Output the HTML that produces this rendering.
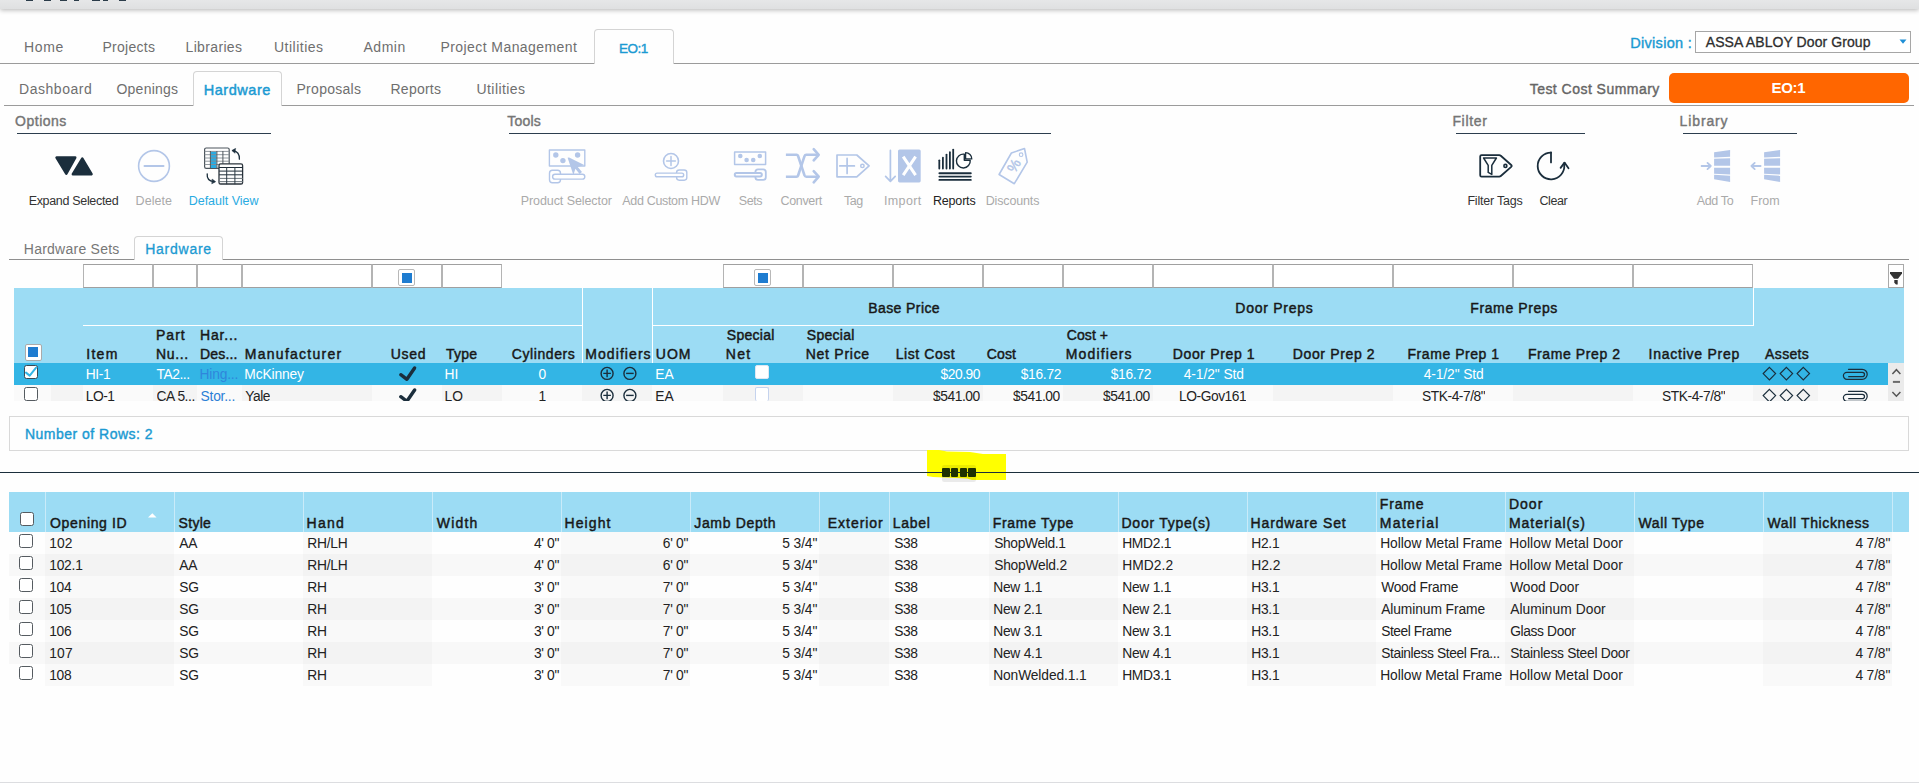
<!DOCTYPE html><html lang="en"><head><meta charset="utf-8"><title>EO:1 - Hardware</title><style>
html,body{margin:0;padding:0;}
body{width:1919px;height:783px;position:relative;overflow:hidden;background:#fefefe;
 font-family:"Liberation Sans",sans-serif;}
.a{position:absolute;}
.t{position:absolute;white-space:nowrap;line-height:20px;height:20px;}
.topbar{left:0;top:0;width:1919px;height:9px;background:linear-gradient(#e6e7e8,#dfe0e1);box-shadow:0 1px 5px rgba(0,0,0,.3);}
.hl{height:1px;background:#9b9b9b;}
.ul{height:1px;background:#2c3e4e;}
.tab{background:#fefefe;border:1px solid #d4d4d4;border-bottom:none;border-radius:4px 4px 0 0;box-sizing:border-box;}
.fb{top:264px;height:24px;box-sizing:border-box;border:1px solid #b4b4b4;border-top-color:#a0a0a0;border-bottom-color:#a0a0a0;background:#fff;}
.cb{box-sizing:border-box;background:#fff;border:1px solid #9a9a9a;border-radius:2px;}
.cbd{box-sizing:border-box;background:#fff;border:1.4px solid #555b60;border-radius:2.5px;}
</style></head><body>
<div class="a topbar"></div>
<div class="a " style="left:26.3px;top:0px;width:7.1px;height:1px;background:#1b2e3c;opacity:.92;"></div>
<div class="a " style="left:43.8px;top:0px;width:7.4px;height:1px;background:#1b2e3c;opacity:.92;"></div>
<div class="a " style="left:60px;top:0px;width:7.4px;height:1px;background:#1b2e3c;opacity:.92;"></div>
<div class="a " style="left:73.8px;top:0px;width:5.6px;height:1px;background:#1b2e3c;opacity:.92;"></div>
<div class="a " style="left:92px;top:0px;width:8px;height:1px;background:#1b2e3c;opacity:.92;"></div>
<div class="a " style="left:102.5px;top:0px;width:5.5px;height:1px;background:#1b2e3c;opacity:.92;"></div>
<div class="a " style="left:119.4px;top:0px;width:6.2px;height:1px;background:#1b2e3c;opacity:.92;"></div>
<div class="a hl" style="left:0px;top:63px;width:1919px;height:1px;"></div>
<div class="a hl" style="left:4px;top:105px;width:1910px;height:1px;"></div>
<div class="a tab" style="left:594px;top:29px;width:80px;height:35px;"></div>
<div class="a tab" style="left:193px;top:71px;width:89px;height:35px;"></div>
<div class="a " style="left:1695px;top:31px;width:216px;height:22px;box-sizing:border-box;border:1px solid #a6a6a6;background:#fff;"></div>
<svg class="a" style="left:1899px;top:39px" width="9" height="6"><path d="M0.5 0.5h7l-3.5 4.2z" fill="#1f8fd6"/></svg>
<div class="a " style="left:1669px;top:73px;width:240px;height:30px;background:#ff6600;border-radius:5px;"></div>
<div class="a ul" style="left:17px;top:133px;width:254px;height:1px;"></div>
<div class="a ul" style="left:509px;top:133px;width:542px;height:1px;"></div>
<div class="a ul" style="left:1456px;top:133px;width:129px;height:1px;"></div>
<div class="a ul" style="left:1683px;top:133px;width:114px;height:1px;"></div>
<div class="a hl" style="left:9px;top:259px;width:1900px;height:1px;background:#8f8f8f;"></div>
<div class="a tab" style="left:134px;top:236px;width:89px;height:24px;"></div>
<div class="a fb" style="left:83px;top:264px;width:70px;height:24px;"></div>
<div class="a fb" style="left:153px;top:264px;width:44px;height:24px;"></div>
<div class="a fb" style="left:197px;top:264px;width:45px;height:24px;"></div>
<div class="a fb" style="left:242px;top:264px;width:130px;height:24px;"></div>
<div class="a fb" style="left:372px;top:264px;width:70px;height:24px;"></div>
<div class="a fb" style="left:442px;top:264px;width:60px;height:24px;"></div>
<div class="a fb" style="left:723px;top:264px;width:80px;height:24px;"></div>
<div class="a fb" style="left:803px;top:264px;width:90px;height:24px;"></div>
<div class="a fb" style="left:893px;top:264px;width:90px;height:24px;"></div>
<div class="a fb" style="left:983px;top:264px;width:80px;height:24px;"></div>
<div class="a fb" style="left:1063px;top:264px;width:90px;height:24px;"></div>
<div class="a fb" style="left:1153px;top:264px;width:120px;height:24px;"></div>
<div class="a fb" style="left:1273px;top:264px;width:120px;height:24px;"></div>
<div class="a fb" style="left:1393px;top:264px;width:120px;height:24px;"></div>
<div class="a fb" style="left:1513px;top:264px;width:120px;height:24px;"></div>
<div class="a fb" style="left:1633px;top:264px;width:120px;height:24px;"></div>
<div class="a cb" style="left:398px;top:269px;width:16.5px;height:16.5px;border-color:#b8b8b8;"><div class="a" style="left:2.5px;top:2.5px;width:10px;height:10px;background:#1e7cd0"></div></div>
<div class="a cb" style="left:754px;top:269px;width:16.5px;height:16.5px;border-color:#b8b8b8;"><div class="a" style="left:2.5px;top:2.5px;width:10px;height:10px;background:#1e7cd0"></div></div>
<div class="a " style="left:1888px;top:264px;width:16px;height:24px;box-sizing:border-box;border:1px solid #a9a9a9;background:#fff;"></div>
<svg class="a" style="left:1889px;top:269px" width="14" height="17"><path d="M1 3h12v1.4l-4 5.4h-4l-4-5.4z" fill="#333"/><path d="M5.3 11h3.4v4.4h-1.7l-1.7-1.6z" fill="#333"/></svg>
<div class="a " style="left:14px;top:288px;width:1890px;height:75px;background:#9cdcf4;"></div>
<div class="a " style="left:83px;top:325px;width:500px;height:1px;background:#fff;"></div>
<div class="a " style="left:652px;top:325px;width:1101px;height:1px;background:#fff;"></div>
<div class="a " style="left:582px;top:288px;width:1px;height:75px;background:#fff;"></div>
<div class="a " style="left:652px;top:288px;width:1px;height:75px;background:#fff;"></div>
<div class="a " style="left:1753px;top:288px;width:1px;height:38px;background:#fff;"></div>
<div class="a cb" style="left:25px;top:344px;width:16.5px;height:16.5px;border-color:#aaa;"><div class="a" style="left:2.2px;top:2.2px;width:10px;height:10px;background:#1e7cd0"></div></div>
<div class="a " style="left:14px;top:363px;width:1874px;height:22px;background:#33b5e5;"></div>
<div class="a " style="left:14px;top:385px;width:37px;height:16px;background:#fafafa;"></div>
<div class="a " style="left:51px;top:385px;width:32px;height:16px;background:#f4f4f4;"></div>
<div class="a " style="left:83px;top:385px;width:70px;height:16px;background:#fafafa;"></div>
<div class="a " style="left:153px;top:385px;width:44px;height:16px;background:#f4f4f4;"></div>
<div class="a " style="left:197px;top:385px;width:45px;height:16px;background:#fafafa;"></div>
<div class="a " style="left:242px;top:385px;width:130px;height:16px;background:#f4f4f4;"></div>
<div class="a " style="left:372px;top:385px;width:70px;height:16px;background:#fafafa;"></div>
<div class="a " style="left:442px;top:385px;width:60px;height:16px;background:#f4f4f4;"></div>
<div class="a " style="left:502px;top:385px;width:80px;height:16px;background:#fafafa;"></div>
<div class="a " style="left:582px;top:385px;width:70px;height:16px;background:#f4f4f4;"></div>
<div class="a " style="left:652px;top:385px;width:71px;height:16px;background:#fafafa;"></div>
<div class="a " style="left:723px;top:385px;width:80px;height:16px;background:#f4f4f4;"></div>
<div class="a " style="left:803px;top:385px;width:90px;height:16px;background:#fafafa;"></div>
<div class="a " style="left:893px;top:385px;width:90px;height:16px;background:#f4f4f4;"></div>
<div class="a " style="left:983px;top:385px;width:80px;height:16px;background:#fafafa;"></div>
<div class="a " style="left:1063px;top:385px;width:90px;height:16px;background:#f4f4f4;"></div>
<div class="a " style="left:1153px;top:385px;width:120px;height:16px;background:#fafafa;"></div>
<div class="a " style="left:1273px;top:385px;width:120px;height:16px;background:#f4f4f4;"></div>
<div class="a " style="left:1393px;top:385px;width:120px;height:16px;background:#fafafa;"></div>
<div class="a " style="left:1513px;top:385px;width:120px;height:16px;background:#f4f4f4;"></div>
<div class="a " style="left:1633px;top:385px;width:120px;height:16px;background:#fafafa;"></div>
<div class="a " style="left:1753px;top:385px;width:65px;height:16px;background:#f4f4f4;"></div>
<div class="a " style="left:1818px;top:385px;width:70px;height:16px;background:#fafafa;"></div>
<div class="a cbd" style="left:24px;top:365px;width:14px;height:14px;border-color:#3b4852;"><svg class="a" style="left:-1.4px;top:-1.4px;overflow:visible" width="14" height="14"><path d="M2 7.6l3.7 3 6.4-7.9" fill="none" stroke="#33b5e5" stroke-width="2" stroke-linecap="round" stroke-linejoin="round"/></svg></div>
<div class="a cbd" style="left:24px;top:387px;width:14px;height:14px;"></div>
<div class="a" style="left:397px;top:365px;width:22px;height:18px;"><svg width="22" height="18" fill="none" stroke="#1b2e3c" stroke-width="3.4" stroke-linecap="round" stroke-linejoin="round"><path d="M3.8 9.7l6.1 4.6 7.7-11.3"/></svg></div>
<div class="a" style="left:397px;top:387px;width:22px;height:18px;height:14px;overflow:hidden;"><svg width="22" height="18" fill="none" stroke="#1b2e3c" stroke-width="3.4" stroke-linecap="round" stroke-linejoin="round"><path d="M3.8 9.7l6.1 4.6 7.7-11.3"/></svg></div>
<div class="a" style="left:599px;top:366px;width:40px;height:15px;"><svg width="40" height="15" fill="none" stroke="#1b2e3c" stroke-width="1.4"><circle cx="8.1" cy="7.4" r="6"/><path d="M8.1 3.6v7.6M4.3 7.4h7.6"/><circle cx="30.9" cy="7.4" r="6"/><path d="M27.1 7.4h7.6"/></svg></div>
<div class="a" style="left:599px;top:388px;width:40px;height:15px;height:13px;overflow:hidden;"><svg width="40" height="15" fill="none" stroke="#1b2e3c" stroke-width="1.4"><circle cx="8.1" cy="7.4" r="6"/><path d="M8.1 3.6v7.6M4.3 7.4h7.6"/><circle cx="30.9" cy="7.4" r="6"/><path d="M27.1 7.4h7.6"/></svg></div>
<div class="a " style="left:755px;top:365px;width:14px;height:14px;box-sizing:border-box;background:#fff;border:1px solid #dfe7f2;border-radius:2px;"></div>
<div class="a " style="left:755px;top:387px;width:14px;height:14px;box-sizing:border-box;background:#fff;border:1px solid #c5d3ee;border-radius:2px;border-bottom:none;"></div>
<div class="a" style="left:1762px;top:366px;width:110px;height:15px;"><svg width="110" height="15" fill="none" stroke="#1b2e3c" stroke-width="1.2"><path d="M7.4 1.3l6.2 6.3-6.2 6.3-6.2-6.3z"/><path d="M24.4 1.3l6.2 6.3-6.2 6.3-6.2-6.3z"/><path d="M41.3 1.3l6.2 6.3-6.2 6.3-6.2-6.3z"/><path d="M86.5 3.3h13.7a5 5 0 0 1 0 10h-15.3a3.5 3.5 0 0 1 0-7h15.4a2.2 2.2 0 0 1 0 4.4h-13.6" stroke-width="1.25" stroke-linecap="round"/></svg></div>
<div class="a" style="left:1762px;top:388px;width:110px;height:15px;height:13px;overflow:hidden;"><svg width="110" height="15" fill="none" stroke="#1b2e3c" stroke-width="1.2"><path d="M7.4 1.3l6.2 6.3-6.2 6.3-6.2-6.3z"/><path d="M24.4 1.3l6.2 6.3-6.2 6.3-6.2-6.3z"/><path d="M41.3 1.3l6.2 6.3-6.2 6.3-6.2-6.3z"/><path d="M86.5 3.3h13.7a5 5 0 0 1 0 10h-15.3a3.5 3.5 0 0 1 0-7h15.4a2.2 2.2 0 0 1 0 4.4h-13.6" stroke-width="1.25" stroke-linecap="round"/></svg></div>
<div class="a " style="left:1888px;top:363px;width:16px;height:38px;background:#ebebeb;"></div>
<svg class="a" style="left:1888px;top:363px" width="16" height="38" fill="none" stroke="#555" stroke-width="1.5"><path d="M4.4 10.9l4-4.2 4 4.2"/><path d="M4.4 29l4 4.2 4-4.2"/><path d="M4.9 18.9h7.1" stroke="#6a6a6a" stroke-width="2"/></svg>
<div class="a " style="left:9px;top:416px;width:1900px;height:35px;box-sizing:border-box;border:1px solid #d9d9d9;background:#fefefe;"></div>
<svg class="a" style="left:920px;top:446px" width="95" height="40"><polygon points="7,4 19,4 27,5.5 50,6 63,8 86,8 86,34 52,34 47,32.5 13,31 7,30" fill="#ffff00"/></svg>
<div class="a " style="left:0px;top:472px;width:1919px;height:1px;background:#1b2e3c;"></div>
<div class="a " style="left:942px;top:464.5px;width:34px;height:17.5px;background:rgba(0,0,0,.08);border-radius:2px;"></div>
<div class="a " style="left:942.3px;top:468px;width:7.4px;height:9.3px;background:#1e3100;border-radius:1px;"></div>
<div class="a " style="left:950.9px;top:468px;width:7.4px;height:9.3px;background:#1e3100;border-radius:1px;"></div>
<div class="a " style="left:959.6px;top:468px;width:7.4px;height:9.3px;background:#1e3100;border-radius:1px;"></div>
<div class="a " style="left:968.2px;top:468px;width:7.4px;height:9.3px;background:#1e3100;border-radius:1px;"></div>
<div class="a " style="left:9px;top:492px;width:1900px;height:40px;background:#9cdcf4;"></div>
<div class="a " style="left:45px;top:492px;width:1px;height:40px;background:#c9ebf9;"></div>
<div class="a " style="left:174px;top:492px;width:1px;height:40px;background:#c9ebf9;"></div>
<div class="a " style="left:303px;top:492px;width:1px;height:40px;background:#c9ebf9;"></div>
<div class="a " style="left:432px;top:492px;width:1px;height:40px;background:#c9ebf9;"></div>
<div class="a " style="left:561px;top:492px;width:1px;height:40px;background:#c9ebf9;"></div>
<div class="a " style="left:690px;top:492px;width:1px;height:40px;background:#c9ebf9;"></div>
<div class="a " style="left:819px;top:492px;width:1px;height:40px;background:#c9ebf9;"></div>
<div class="a " style="left:889px;top:492px;width:1px;height:40px;background:#c9ebf9;"></div>
<div class="a " style="left:989px;top:492px;width:1px;height:40px;background:#c9ebf9;"></div>
<div class="a " style="left:1118px;top:492px;width:1px;height:40px;background:#c9ebf9;"></div>
<div class="a " style="left:1247px;top:492px;width:1px;height:40px;background:#c9ebf9;"></div>
<div class="a " style="left:1376px;top:492px;width:1px;height:40px;background:#c9ebf9;"></div>
<div class="a " style="left:1505px;top:492px;width:1px;height:40px;background:#c9ebf9;"></div>
<div class="a " style="left:1634px;top:492px;width:1px;height:40px;background:#c9ebf9;"></div>
<div class="a " style="left:1763px;top:492px;width:1px;height:40px;background:#c9ebf9;"></div>
<div class="a " style="left:1892px;top:492px;width:1px;height:40px;background:#c9ebf9;"></div>
<div class="a cbd" style="left:20px;top:512px;width:14px;height:14px;"></div>
<svg class="a" style="left:148px;top:513px" width="9" height="5"><path d="M0 4.6L4.3 0.2 8.6 4.6z" fill="#fff"/></svg>
<div class="a " style="left:9px;top:532px;width:36px;height:22px;background:#fefefe;"></div>
<div class="a " style="left:45px;top:532px;width:129px;height:22px;background:#f9f9f9;"></div>
<div class="a " style="left:174px;top:532px;width:129px;height:22px;background:#fefefe;"></div>
<div class="a " style="left:303px;top:532px;width:129px;height:22px;background:#f9f9f9;"></div>
<div class="a " style="left:432px;top:532px;width:129px;height:22px;background:#fefefe;"></div>
<div class="a " style="left:561px;top:532px;width:129px;height:22px;background:#f9f9f9;"></div>
<div class="a " style="left:690px;top:532px;width:129px;height:22px;background:#fefefe;"></div>
<div class="a " style="left:819px;top:532px;width:70px;height:22px;background:#f9f9f9;"></div>
<div class="a " style="left:889px;top:532px;width:100px;height:22px;background:#fefefe;"></div>
<div class="a " style="left:989px;top:532px;width:129px;height:22px;background:#f9f9f9;"></div>
<div class="a " style="left:1118px;top:532px;width:129px;height:22px;background:#fefefe;"></div>
<div class="a " style="left:1247px;top:532px;width:129px;height:22px;background:#f9f9f9;"></div>
<div class="a " style="left:1376px;top:532px;width:129px;height:22px;background:#fefefe;"></div>
<div class="a " style="left:1505px;top:532px;width:129px;height:22px;background:#f9f9f9;"></div>
<div class="a " style="left:1634px;top:532px;width:129px;height:22px;background:#fefefe;"></div>
<div class="a " style="left:1763px;top:532px;width:129px;height:22px;background:#f9f9f9;"></div>
<div class="a cbd" style="left:19px;top:534px;width:14px;height:14px;"></div>
<div class="a " style="left:9px;top:554px;width:36px;height:22px;background:#f8f8f8;"></div>
<div class="a " style="left:45px;top:554px;width:129px;height:22px;background:#f3f3f3;"></div>
<div class="a " style="left:174px;top:554px;width:129px;height:22px;background:#f8f8f8;"></div>
<div class="a " style="left:303px;top:554px;width:129px;height:22px;background:#f3f3f3;"></div>
<div class="a " style="left:432px;top:554px;width:129px;height:22px;background:#f8f8f8;"></div>
<div class="a " style="left:561px;top:554px;width:129px;height:22px;background:#f3f3f3;"></div>
<div class="a " style="left:690px;top:554px;width:129px;height:22px;background:#f8f8f8;"></div>
<div class="a " style="left:819px;top:554px;width:70px;height:22px;background:#f3f3f3;"></div>
<div class="a " style="left:889px;top:554px;width:100px;height:22px;background:#f8f8f8;"></div>
<div class="a " style="left:989px;top:554px;width:129px;height:22px;background:#f3f3f3;"></div>
<div class="a " style="left:1118px;top:554px;width:129px;height:22px;background:#f8f8f8;"></div>
<div class="a " style="left:1247px;top:554px;width:129px;height:22px;background:#f3f3f3;"></div>
<div class="a " style="left:1376px;top:554px;width:129px;height:22px;background:#f8f8f8;"></div>
<div class="a " style="left:1505px;top:554px;width:129px;height:22px;background:#f3f3f3;"></div>
<div class="a " style="left:1634px;top:554px;width:129px;height:22px;background:#f8f8f8;"></div>
<div class="a " style="left:1763px;top:554px;width:129px;height:22px;background:#f3f3f3;"></div>
<div class="a cbd" style="left:19px;top:556px;width:14px;height:14px;"></div>
<div class="a " style="left:9px;top:576px;width:36px;height:22px;background:#fefefe;"></div>
<div class="a " style="left:45px;top:576px;width:129px;height:22px;background:#f9f9f9;"></div>
<div class="a " style="left:174px;top:576px;width:129px;height:22px;background:#fefefe;"></div>
<div class="a " style="left:303px;top:576px;width:129px;height:22px;background:#f9f9f9;"></div>
<div class="a " style="left:432px;top:576px;width:129px;height:22px;background:#fefefe;"></div>
<div class="a " style="left:561px;top:576px;width:129px;height:22px;background:#f9f9f9;"></div>
<div class="a " style="left:690px;top:576px;width:129px;height:22px;background:#fefefe;"></div>
<div class="a " style="left:819px;top:576px;width:70px;height:22px;background:#f9f9f9;"></div>
<div class="a " style="left:889px;top:576px;width:100px;height:22px;background:#fefefe;"></div>
<div class="a " style="left:989px;top:576px;width:129px;height:22px;background:#f9f9f9;"></div>
<div class="a " style="left:1118px;top:576px;width:129px;height:22px;background:#fefefe;"></div>
<div class="a " style="left:1247px;top:576px;width:129px;height:22px;background:#f9f9f9;"></div>
<div class="a " style="left:1376px;top:576px;width:129px;height:22px;background:#fefefe;"></div>
<div class="a " style="left:1505px;top:576px;width:129px;height:22px;background:#f9f9f9;"></div>
<div class="a " style="left:1634px;top:576px;width:129px;height:22px;background:#fefefe;"></div>
<div class="a " style="left:1763px;top:576px;width:129px;height:22px;background:#f9f9f9;"></div>
<div class="a cbd" style="left:19px;top:578px;width:14px;height:14px;"></div>
<div class="a " style="left:9px;top:598px;width:36px;height:22px;background:#f8f8f8;"></div>
<div class="a " style="left:45px;top:598px;width:129px;height:22px;background:#f3f3f3;"></div>
<div class="a " style="left:174px;top:598px;width:129px;height:22px;background:#f8f8f8;"></div>
<div class="a " style="left:303px;top:598px;width:129px;height:22px;background:#f3f3f3;"></div>
<div class="a " style="left:432px;top:598px;width:129px;height:22px;background:#f8f8f8;"></div>
<div class="a " style="left:561px;top:598px;width:129px;height:22px;background:#f3f3f3;"></div>
<div class="a " style="left:690px;top:598px;width:129px;height:22px;background:#f8f8f8;"></div>
<div class="a " style="left:819px;top:598px;width:70px;height:22px;background:#f3f3f3;"></div>
<div class="a " style="left:889px;top:598px;width:100px;height:22px;background:#f8f8f8;"></div>
<div class="a " style="left:989px;top:598px;width:129px;height:22px;background:#f3f3f3;"></div>
<div class="a " style="left:1118px;top:598px;width:129px;height:22px;background:#f8f8f8;"></div>
<div class="a " style="left:1247px;top:598px;width:129px;height:22px;background:#f3f3f3;"></div>
<div class="a " style="left:1376px;top:598px;width:129px;height:22px;background:#f8f8f8;"></div>
<div class="a " style="left:1505px;top:598px;width:129px;height:22px;background:#f3f3f3;"></div>
<div class="a " style="left:1634px;top:598px;width:129px;height:22px;background:#f8f8f8;"></div>
<div class="a " style="left:1763px;top:598px;width:129px;height:22px;background:#f3f3f3;"></div>
<div class="a cbd" style="left:19px;top:600px;width:14px;height:14px;"></div>
<div class="a " style="left:9px;top:620px;width:36px;height:22px;background:#fefefe;"></div>
<div class="a " style="left:45px;top:620px;width:129px;height:22px;background:#f9f9f9;"></div>
<div class="a " style="left:174px;top:620px;width:129px;height:22px;background:#fefefe;"></div>
<div class="a " style="left:303px;top:620px;width:129px;height:22px;background:#f9f9f9;"></div>
<div class="a " style="left:432px;top:620px;width:129px;height:22px;background:#fefefe;"></div>
<div class="a " style="left:561px;top:620px;width:129px;height:22px;background:#f9f9f9;"></div>
<div class="a " style="left:690px;top:620px;width:129px;height:22px;background:#fefefe;"></div>
<div class="a " style="left:819px;top:620px;width:70px;height:22px;background:#f9f9f9;"></div>
<div class="a " style="left:889px;top:620px;width:100px;height:22px;background:#fefefe;"></div>
<div class="a " style="left:989px;top:620px;width:129px;height:22px;background:#f9f9f9;"></div>
<div class="a " style="left:1118px;top:620px;width:129px;height:22px;background:#fefefe;"></div>
<div class="a " style="left:1247px;top:620px;width:129px;height:22px;background:#f9f9f9;"></div>
<div class="a " style="left:1376px;top:620px;width:129px;height:22px;background:#fefefe;"></div>
<div class="a " style="left:1505px;top:620px;width:129px;height:22px;background:#f9f9f9;"></div>
<div class="a " style="left:1634px;top:620px;width:129px;height:22px;background:#fefefe;"></div>
<div class="a " style="left:1763px;top:620px;width:129px;height:22px;background:#f9f9f9;"></div>
<div class="a cbd" style="left:19px;top:622px;width:14px;height:14px;"></div>
<div class="a " style="left:9px;top:642px;width:36px;height:22px;background:#f8f8f8;"></div>
<div class="a " style="left:45px;top:642px;width:129px;height:22px;background:#f3f3f3;"></div>
<div class="a " style="left:174px;top:642px;width:129px;height:22px;background:#f8f8f8;"></div>
<div class="a " style="left:303px;top:642px;width:129px;height:22px;background:#f3f3f3;"></div>
<div class="a " style="left:432px;top:642px;width:129px;height:22px;background:#f8f8f8;"></div>
<div class="a " style="left:561px;top:642px;width:129px;height:22px;background:#f3f3f3;"></div>
<div class="a " style="left:690px;top:642px;width:129px;height:22px;background:#f8f8f8;"></div>
<div class="a " style="left:819px;top:642px;width:70px;height:22px;background:#f3f3f3;"></div>
<div class="a " style="left:889px;top:642px;width:100px;height:22px;background:#f8f8f8;"></div>
<div class="a " style="left:989px;top:642px;width:129px;height:22px;background:#f3f3f3;"></div>
<div class="a " style="left:1118px;top:642px;width:129px;height:22px;background:#f8f8f8;"></div>
<div class="a " style="left:1247px;top:642px;width:129px;height:22px;background:#f3f3f3;"></div>
<div class="a " style="left:1376px;top:642px;width:129px;height:22px;background:#f8f8f8;"></div>
<div class="a " style="left:1505px;top:642px;width:129px;height:22px;background:#f3f3f3;"></div>
<div class="a " style="left:1634px;top:642px;width:129px;height:22px;background:#f8f8f8;"></div>
<div class="a " style="left:1763px;top:642px;width:129px;height:22px;background:#f3f3f3;"></div>
<div class="a cbd" style="left:19px;top:644px;width:14px;height:14px;"></div>
<div class="a " style="left:9px;top:664px;width:36px;height:22px;background:#fefefe;"></div>
<div class="a " style="left:45px;top:664px;width:129px;height:22px;background:#f9f9f9;"></div>
<div class="a " style="left:174px;top:664px;width:129px;height:22px;background:#fefefe;"></div>
<div class="a " style="left:303px;top:664px;width:129px;height:22px;background:#f9f9f9;"></div>
<div class="a " style="left:432px;top:664px;width:129px;height:22px;background:#fefefe;"></div>
<div class="a " style="left:561px;top:664px;width:129px;height:22px;background:#f9f9f9;"></div>
<div class="a " style="left:690px;top:664px;width:129px;height:22px;background:#fefefe;"></div>
<div class="a " style="left:819px;top:664px;width:70px;height:22px;background:#f9f9f9;"></div>
<div class="a " style="left:889px;top:664px;width:100px;height:22px;background:#fefefe;"></div>
<div class="a " style="left:989px;top:664px;width:129px;height:22px;background:#f9f9f9;"></div>
<div class="a " style="left:1118px;top:664px;width:129px;height:22px;background:#fefefe;"></div>
<div class="a " style="left:1247px;top:664px;width:129px;height:22px;background:#f9f9f9;"></div>
<div class="a " style="left:1376px;top:664px;width:129px;height:22px;background:#fefefe;"></div>
<div class="a " style="left:1505px;top:664px;width:129px;height:22px;background:#f9f9f9;"></div>
<div class="a " style="left:1634px;top:664px;width:129px;height:22px;background:#fefefe;"></div>
<div class="a " style="left:1763px;top:664px;width:129px;height:22px;background:#f9f9f9;"></div>
<div class="a cbd" style="left:19px;top:666px;width:14px;height:14px;"></div>
<div class="a " style="left:0px;top:782px;width:1919px;height:1px;background:#dcdde0;"></div>
<svg class="a" style="left:0;top:140px" width="1919" height="50" viewBox="0 140 1919 50" fill="none" stroke-linecap="round" stroke-linejoin="round"><g fill="#1b2e3c" stroke="#1b2e3c" stroke-width="2.6"><path d="M56.6 157.5h18.6l-8.9 16.2z"/><path d="M82.3 158.7l9.2 15.5h-18.6z"/></g><g stroke="#b3c6e8"><circle cx="154" cy="166" r="15.4" stroke-width="1.6"/><path d="M144.5 166h19" stroke-width="2"/></g><g><rect x="204.6" y="148" width="24.6" height="20.4" rx="1.6" fill="#fff" stroke="#4c555d" stroke-width="1.2"/><rect x="210.9" y="151.6" width="5.6" height="16.4" fill="#29abe2" stroke="none"/><path d="M205 151.4h24M205 154.7h24M205 158h24M205 161.2h24M205 164.5h24" stroke="#858c93" stroke-width="0.9"/><path d="M210.4 151.4v17M216.9 151.4v17M222.9 151.4v17" stroke="#4f585f" stroke-width="1"/><rect x="219" y="163.8" width="23.6" height="20.2" rx="1.6" fill="#fff" stroke="#2b343c" stroke-width="1.3"/><path d="M219.5 167.5h23M219.5 171.1h23M219.5 174.8h23" stroke="#1f2d38" stroke-width="1"/><path d="M219.5 178.4h23M219.5 181.6h23" stroke="#6c757c" stroke-width="1"/><path d="M226.7 167.5v16.3M234.9 167.5v16.3" stroke="#2b3842" stroke-width="1"/><path d="M233 150.6c4.2 0.6 6.6 3.6 6.4 8.6" stroke="#1b2e3c" stroke-width="1.3"/><path d="M235.3 148.6l-3.4 1.9 2.9 2.5z" fill="#1b2e3c" stroke="#1b2e3c" stroke-width=".6"/><path d="M207.2 173.8c-0.4 4.6 2.2 7.4 6.6 7.9" stroke="#1b2e3c" stroke-width="1.3"/><path d="M212.4 179.3l3.2 2.4-3.5 1.9z" fill="#1b2e3c" stroke="#1b2e3c" stroke-width=".6"/></g><g stroke="#b3c6e8" stroke-width="1.4"><rect x="549.4" y="150" width="35.4" height="16"/><g fill="#b3c6e8" stroke="none"><circle cx="555.8" cy="155" r="2.7"/><circle cx="562.9" cy="160.6" r="2.7"/><circle cx="577.6" cy="155" r="2.7"/><path d="M567.6 157.8q1.6-0.6 3 0.4l13.6 6.9-6.4 2 4.2 5-2.4 1.8-4.2-5.2-2 6.4z"/></g><rect x="549.5" y="170.3" width="11" height="12.4" rx="3" fill="#fff"/><rect x="552.6" y="174.3" width="32.2" height="4.8" rx="2.4" fill="#fff"/></g><g stroke="#b3c6e8" stroke-width="1.4"><circle cx="671" cy="161" r="7.5" stroke-width="1.6"/><path d="M666.6 161h8.8M671 156.6v8.8" stroke-width="1.5"/><rect x="676.6" y="170" width="10.2" height="10.2" rx="2.6" fill="#fff"/><rect x="655.3" y="173.1" width="28.4" height="3.7" rx="1.85" fill="#fff"/></g><g stroke="#b3c6e8" stroke-width="1.5"><rect x="734.6" y="152" width="31" height="12.4"/><g fill="#b3c6e8" stroke="none"><circle cx="740.3" cy="156" r="2.3"/><circle cx="746.6" cy="160" r="2.3"/><circle cx="753.2" cy="160" r="2.3"/><circle cx="759.8" cy="156" r="2.3"/></g><rect x="755.4" y="169.4" width="10.4" height="10.4" rx="2.6" fill="#fff" stroke-width="1.8"/><rect x="734.8" y="173" width="27" height="3.4" rx="1.6" fill="#fff" stroke-width="2"/></g><g stroke="#b3c6e8" stroke-width="2.6" stroke-linecap="butt"><path d="M785.9 154.8h10.6q1.2 0 1.6 1.2l6.4 19.4q0.5 1.3 1.8 1.3h11.6"/><path d="M785.9 176.7h10.6q1.2 0 1.6-1.2l6.4-19.4q0.5-1.3 1.8-1.3h11.6"/><path d="M813.7 149.2l5 5.6-5 5.6M813.7 171.1l5 5.6-5 5.6" stroke-linecap="round"/></g><g stroke="#b3c6e8" stroke-width="1.7"><path d="M837 155h19.8l12.3 10.9-12.3 10.9h-19.8z"/><path d="M839.8 165.9h14.6M847.1 158.4v15"/><circle cx="862.4" cy="165.9" r="1.7" stroke-width="1.5"/></g><g stroke="#b3c6e8" stroke-width="1.7"><path d="M890.4 150.4v30.6M885.6 176.4l4.8 5 4.8-5"/><rect x="898" y="149.4" width="22.7" height="33" rx="1.6" fill="#b3c6e8" stroke="none"/><path d="M903.2 156.6l12.4 18.6M915.6 156.6l-12.4 18.6" stroke="#fff" stroke-width="3" stroke-linecap="butt"/></g><g stroke="#1b2e3c"><path d="M939.3 168.6V160.3" stroke-width="1.8"/><path d="M942.9 168.6V157.6" stroke-width="1.8"/><path d="M946.5 168.6V154.6" stroke-width="1.8"/><path d="M949.9 168.6V152.2" stroke-width="1.8"/><path d="M953.2 168.6V149.6" stroke-width="1.8"/><path d="M964.3 154.2A6.9 6.9 0 1 0 970.2 160.3H964.3z" stroke-width="1.4"/><path d="M965.6 158.9V152.7A6.2 6.2 0 0 1 971.8 158.9z" stroke-width="1.3"/><path d="M939.4 173.3h31.4M939.4 176.6h31.4M939.4 179.9h31.4" stroke-width="1.9"/></g><g stroke="#b3c6e8" stroke-width="1.6"><path d="M1024.5 148.5l2.7 13.7-12.9 21.5-15.2-9.2 12.3-21.5z"/><circle cx="1021.1" cy="154.7" r="1.8" stroke-width="1.1"/><text x="1014" y="165.6" transform="rotate(-60 1014 165.6)" text-anchor="middle" dominant-baseline="central" font-family="Liberation Sans,sans-serif" font-size="14.5" fill="#b3c6e8" stroke="#b3c6e8" stroke-width="0.45">%</text></g><g stroke="#1b2e3c" stroke-width="1.8"><path d="M1480.2 156.6q0-1.4 1.4-1.4h17.6q0.9 0 1.6 0.6l10.4 9.2q1 0.9 0 1.8l-10.4 9.2q-0.7 0.6-1.6 0.6h-17.6q-1.4 0-1.4-1.4z"/><path d="M1483.6 158h12.8l-4.6 7.4v9l-3.6-2v-7z" stroke-width="1.5"/><circle cx="1505.4" cy="165.9" r="1.5" stroke-width="1.6"/></g><g stroke="#1b2e3c" stroke-width="1.8"><path d="M1551 152.4v10"/><path d="M1551 152.7a13.3 13.3 0 1 0 13.25 12.2l0.2-2"/><path d="M1560.6 167.9l3.9-5.3 4 5.6"/></g><g fill="#b3c6e8" stroke="none"><path d="M1714.1 152.25L1730.1 150.0L1730.1 156.8L1714.1 157.6z"/><path d="M1714.1 158.8L1730.1 158.2L1730.1 165.8L1714.1 165.8z"/><path d="M1714.1 167.7L1730.1 167.7L1730.1 174.4L1714.1 173.8z"/><path d="M1714.1 174.7L1730.1 175.8L1730.1 181.9L1714.1 179.2z"/><path d="M1764.1 152.25L1780.1 150.0L1780.1 156.8L1764.1 157.6z"/><path d="M1764.1 158.8L1780.1 158.2L1780.1 165.8L1764.1 165.8z"/><path d="M1764.1 167.7L1780.1 167.7L1780.1 174.4L1764.1 173.8z"/><path d="M1764.1 174.7L1780.1 175.8L1780.1 181.9L1764.1 179.2z"/></g><g stroke="#b3c6e8" stroke-width="1.8"><path d="M1701.6 166h8.6M1707.5 162.9l3.3 3.1-3.3 3.1"/><path d="M1760.6 166h-8.6M1754.7 162.9l-3.3 3.1 3.3 3.1"/></g></svg>
<span class="t" style="left:24.00px;top:37.00px;font-size:14px;color:#6f6f6f;letter-spacing:0.647px;">Home</span>
<span class="t" style="left:102.50px;top:37.00px;font-size:14px;color:#6f6f6f;letter-spacing:0.275px;">Projects</span>
<span class="t" style="left:185.50px;top:37.00px;font-size:14px;color:#6f6f6f;letter-spacing:0.351px;">Libraries</span>
<span class="t" style="left:274.00px;top:37.00px;font-size:14px;color:#6f6f6f;letter-spacing:0.485px;">Utilities</span>
<span class="t" style="left:363.50px;top:37.00px;font-size:14px;color:#6f6f6f;letter-spacing:0.526px;">Admin</span>
<span class="t" style="left:440.50px;top:37.00px;font-size:14px;color:#6f6f6f;letter-spacing:0.424px;">Project Management</span>
<span class="t" style="left:618.90px;top:38.50px;font-size:13.5px;color:#1b9ad2;letter-spacing:-0.450px;-webkit-text-stroke:0.4px #1b9ad2;">EO:1</span>
<span class="t" style="left:1630.20px;top:33.00px;font-size:14.5px;color:#1b9ad2;letter-spacing:0.312px;-webkit-text-stroke:0.4px #1b9ad2;">Division :</span>
<span class="t" style="left:1705.75px;top:32.00px;font-size:14px;color:#2e2e2e;letter-spacing:0.076px;-webkit-text-stroke:0.3px #2e2e2e;">ASSA ABLOY Door Group</span>
<span class="t" style="left:19.00px;top:79.00px;font-size:14px;color:#6f6f6f;letter-spacing:0.537px;">Dashboard</span>
<span class="t" style="left:116.50px;top:79.00px;font-size:14px;color:#6f6f6f;letter-spacing:0.224px;">Openings</span>
<span class="t" style="left:296.50px;top:79.00px;font-size:14px;color:#6f6f6f;letter-spacing:0.281px;">Proposals</span>
<span class="t" style="left:390.50px;top:79.00px;font-size:14px;color:#6f6f6f;letter-spacing:0.247px;">Reports</span>
<span class="t" style="left:476.50px;top:79.00px;font-size:14px;color:#6f6f6f;letter-spacing:0.423px;">Utilities</span>
<span class="t" style="left:203.72px;top:80.00px;font-size:14.5px;color:#1b9ad2;letter-spacing:0.537px;-webkit-text-stroke:0.45px #1b9ad2;">Hardware</span>
<span class="t" style="left:1529.70px;top:79.00px;font-size:14px;color:#666;letter-spacing:0.466px;-webkit-text-stroke:0.4px #666;">Test Cost Summary</span>
<span class="t" style="left:1771.50px;top:77.50px;font-size:15px;color:#fff;letter-spacing:-0.322px;font-weight:700;">EO:1</span>
<span class="t" style="left:15.10px;top:111.00px;font-size:14px;color:#757575;letter-spacing:0.492px;-webkit-text-stroke:0.4px #757575;">Options</span>
<span class="t" style="left:507.20px;top:111.00px;font-size:14px;color:#757575;letter-spacing:0.229px;-webkit-text-stroke:0.4px #757575;">Tools</span>
<span class="t" style="left:1452.40px;top:111.00px;font-size:14px;color:#757575;letter-spacing:0.670px;-webkit-text-stroke:0.4px #757575;">Filter</span>
<span class="t" style="left:1679.60px;top:111.00px;font-size:14px;color:#757575;letter-spacing:0.868px;-webkit-text-stroke:0.4px #757575;">Library</span>
<span class="t" style="left:28.70px;top:191.00px;font-size:12.5px;color:#333;letter-spacing:-0.326px;">Expand Selected</span>
<span class="t" style="left:135.60px;top:191.00px;font-size:12.5px;color:#aaaaaa;letter-spacing:0.044px;">Delete</span>
<span class="t" style="left:188.70px;top:191.00px;font-size:12.5px;color:#29abe2;letter-spacing:-0.011px;">Default View</span>
<span class="t" style="left:520.70px;top:191.00px;font-size:12.5px;color:#aaaaaa;letter-spacing:-0.076px;">Product Selector</span>
<span class="t" style="left:622.30px;top:191.00px;font-size:12.5px;color:#aaaaaa;letter-spacing:-0.324px;">Add Custom HDW</span>
<span class="t" style="left:738.80px;top:191.00px;font-size:12.5px;color:#aaaaaa;letter-spacing:-0.450px;">Sets</span>
<span class="t" style="left:780.50px;top:191.00px;font-size:12.5px;color:#aaaaaa;letter-spacing:-0.333px;">Convert</span>
<span class="t" style="left:844.00px;top:191.00px;font-size:12.5px;color:#aaaaaa;letter-spacing:-0.450px;">Tag</span>
<span class="t" style="left:884.00px;top:191.00px;font-size:12.5px;color:#aaaaaa;letter-spacing:0.350px;">Import</span>
<span class="t" style="left:933.00px;top:191.00px;font-size:12.5px;color:#222;letter-spacing:-0.186px;">Reports</span>
<span class="t" style="left:985.70px;top:191.00px;font-size:12.5px;color:#aaaaaa;letter-spacing:-0.142px;">Discounts</span>
<span class="t" style="left:1467.40px;top:191.00px;font-size:12.5px;color:#333;letter-spacing:-0.200px;">Filter Tags</span>
<span class="t" style="left:1539.50px;top:191.00px;font-size:12.5px;color:#333;letter-spacing:-0.450px;">Clear</span>
<span class="t" style="left:1696.70px;top:191.00px;font-size:12.5px;color:#aaaaaa;letter-spacing:-0.353px;">Add To</span>
<span class="t" style="left:1750.50px;top:191.00px;font-size:12.5px;color:#aaaaaa;letter-spacing:0.017px;">From</span>
<span class="t" style="left:23.80px;top:239.00px;font-size:14px;color:#777;letter-spacing:0.242px;">Hardware Sets</span>
<span class="t" style="left:145.15px;top:239.00px;font-size:14px;color:#1b9ad2;letter-spacing:0.757px;-webkit-text-stroke:0.3px #1b9ad2;">Hardware</span>
<span class="t" style="left:86.22px;top:344.00px;font-size:14px;color:#181818;letter-spacing:1.300px;-webkit-text-stroke:0.45px #181818;">Item</span>
<span class="t" style="left:156.03px;top:325.00px;font-size:14px;color:#181818;letter-spacing:1.021px;-webkit-text-stroke:0.45px #181818;">Part</span>
<span class="t" style="left:156.03px;top:344.00px;font-size:14px;color:#181818;letter-spacing:0.669px;-webkit-text-stroke:0.45px #181818;">Nu...</span>
<span class="t" style="left:200.03px;top:325.00px;font-size:14px;color:#181818;letter-spacing:0.797px;-webkit-text-stroke:0.45px #181818;">Har...</span>
<span class="t" style="left:200.03px;top:344.00px;font-size:14px;color:#181818;letter-spacing:0.175px;-webkit-text-stroke:0.45px #181818;">Des...</span>
<span class="t" style="left:244.83px;top:344.00px;font-size:14px;color:#181818;letter-spacing:1.257px;-webkit-text-stroke:0.45px #181818;">Manufacturer</span>
<span class="t" style="left:390.78px;top:344.00px;font-size:14px;color:#181818;letter-spacing:0.735px;-webkit-text-stroke:0.45px #181818;">Used</span>
<span class="t" style="left:446.03px;top:344.00px;font-size:14px;color:#181818;letter-spacing:0.262px;-webkit-text-stroke:0.45px #181818;">Type</span>
<span class="t" style="left:511.78px;top:344.00px;font-size:14px;color:#181818;letter-spacing:0.594px;-webkit-text-stroke:0.45px #181818;">Cylinders</span>
<span class="t" style="left:585.27px;top:344.00px;font-size:14px;color:#181818;letter-spacing:1.070px;-webkit-text-stroke:0.45px #181818;">Modifiers</span>
<span class="t" style="left:655.77px;top:344.00px;font-size:14px;color:#181818;letter-spacing:1.050px;-webkit-text-stroke:0.45px #181818;">UOM</span>
<span class="t" style="left:726.77px;top:325.00px;font-size:14px;color:#181818;letter-spacing:0.299px;-webkit-text-stroke:0.45px #181818;">Special</span>
<span class="t" style="left:725.77px;top:344.00px;font-size:14px;color:#181818;letter-spacing:1.300px;-webkit-text-stroke:0.45px #181818;">Net</span>
<span class="t" style="left:806.77px;top:325.00px;font-size:14px;color:#181818;letter-spacing:0.299px;-webkit-text-stroke:0.45px #181818;">Special</span>
<span class="t" style="left:805.77px;top:344.00px;font-size:14px;color:#181818;letter-spacing:0.727px;-webkit-text-stroke:0.45px #181818;">Net Price</span>
<span class="t" style="left:895.77px;top:344.00px;font-size:14px;color:#181818;letter-spacing:0.566px;-webkit-text-stroke:0.45px #181818;">List Cost</span>
<span class="t" style="left:986.77px;top:344.00px;font-size:14px;color:#181818;letter-spacing:0.151px;-webkit-text-stroke:0.45px #181818;">Cost</span>
<span class="t" style="left:1066.77px;top:325.00px;font-size:14px;color:#181818;letter-spacing:0.085px;-webkit-text-stroke:0.45px #181818;">Cost +</span>
<span class="t" style="left:1065.77px;top:344.00px;font-size:14px;color:#181818;letter-spacing:1.132px;-webkit-text-stroke:0.45px #181818;">Modifiers</span>
<span class="t" style="left:1172.77px;top:344.00px;font-size:14px;color:#181818;letter-spacing:0.640px;-webkit-text-stroke:0.45px #181818;">Door Prep 1</span>
<span class="t" style="left:1292.77px;top:344.00px;font-size:14px;color:#181818;letter-spacing:0.640px;-webkit-text-stroke:0.45px #181818;">Door Prep 2</span>
<span class="t" style="left:1407.52px;top:344.00px;font-size:14px;color:#181818;letter-spacing:0.550px;-webkit-text-stroke:0.45px #181818;">Frame Prep 1</span>
<span class="t" style="left:1527.92px;top:344.00px;font-size:14px;color:#181818;letter-spacing:0.605px;-webkit-text-stroke:0.45px #181818;">Frame Prep 2</span>
<span class="t" style="left:1648.52px;top:344.00px;font-size:14px;color:#181818;letter-spacing:0.761px;-webkit-text-stroke:0.45px #181818;">Inactive Prep</span>
<span class="t" style="left:1765.12px;top:344.00px;font-size:14px;color:#181818;letter-spacing:0.347px;-webkit-text-stroke:0.45px #181818;">Assets</span>
<span class="t" style="left:868.27px;top:298.00px;font-size:14px;color:#181818;letter-spacing:0.410px;-webkit-text-stroke:0.45px #181818;">Base Price</span>
<span class="t" style="left:1235.27px;top:298.00px;font-size:14px;color:#181818;letter-spacing:0.755px;-webkit-text-stroke:0.45px #181818;">Door Preps</span>
<span class="t" style="left:1470.27px;top:298.00px;font-size:14px;color:#181818;letter-spacing:0.619px;-webkit-text-stroke:0.45px #181818;">Frame Preps</span>
<span class="t" style="left:85.70px;top:364.50px;font-size:13.8px;color:#ffffff;letter-spacing:-0.397px;">HI-1</span>
<span class="t" style="left:156.50px;top:364.50px;font-size:13.8px;color:#ffffff;letter-spacing:-0.450px;">TA2...</span>
<span class="t" style="left:199.50px;top:364.50px;font-size:13.8px;color:#2f86dc;letter-spacing:-0.174px;">Hing...</span>
<span class="t" style="left:244.30px;top:364.50px;font-size:13.8px;color:#ffffff;letter-spacing:-0.140px;">McKinney</span>
<span class="t" style="left:444.50px;top:364.50px;font-size:13.8px;color:#ffffff;">HI</span>
<span class="t" style="left:538.50px;top:364.50px;font-size:13.8px;color:#ffffff;">0</span>
<span class="t" style="left:655.25px;top:364.50px;font-size:13.8px;color:#ffffff;">EA</span>
<span class="t" style="left:940.47px;top:364.50px;font-size:13.8px;color:#ffffff;letter-spacing:-0.450px;">$20.90</span>
<span class="t" style="left:1020.75px;top:364.50px;font-size:13.8px;color:#ffffff;letter-spacing:-0.305px;">$16.72</span>
<span class="t" style="left:1110.75px;top:364.50px;font-size:13.8px;color:#ffffff;letter-spacing:-0.305px;">$16.72</span>
<span class="t" style="left:1183.75px;top:364.50px;font-size:13.8px;color:#ffffff;letter-spacing:-0.079px;">4-1/2&quot; Std</span>
<span class="t" style="left:1423.75px;top:364.50px;font-size:13.8px;color:#ffffff;letter-spacing:-0.107px;">4-1/2&quot; Std</span>
<span class="t" style="left:85.70px;top:386.50px;font-size:13.8px;color:#222222;letter-spacing:-0.450px;height:14.50px;overflow:hidden;">LO-1</span>
<span class="t" style="left:156.50px;top:386.50px;font-size:13.8px;color:#222222;letter-spacing:-0.450px;height:14.50px;overflow:hidden;">CA 5...</span>
<span class="t" style="left:200.50px;top:386.50px;font-size:13.8px;color:#2b80d6;letter-spacing:-0.201px;height:14.50px;overflow:hidden;">Stor...</span>
<span class="t" style="left:245.30px;top:386.50px;font-size:13.8px;color:#222222;letter-spacing:-0.450px;height:14.50px;overflow:hidden;">Yale</span>
<span class="t" style="left:444.50px;top:386.50px;font-size:13.8px;color:#222222;height:14.50px;overflow:hidden;">LO</span>
<span class="t" style="left:538.50px;top:386.50px;font-size:13.8px;color:#222222;height:14.50px;overflow:hidden;">1</span>
<span class="t" style="left:655.25px;top:386.50px;font-size:13.8px;color:#222222;height:14.50px;overflow:hidden;">EA</span>
<span class="t" style="left:933.00px;top:386.50px;font-size:13.8px;color:#222222;letter-spacing:-0.450px;height:14.50px;overflow:hidden;">$541.00</span>
<span class="t" style="left:1013.00px;top:386.50px;font-size:13.8px;color:#222222;letter-spacing:-0.450px;height:14.50px;overflow:hidden;">$541.00</span>
<span class="t" style="left:1103.00px;top:386.50px;font-size:13.8px;color:#222222;letter-spacing:-0.450px;height:14.50px;overflow:hidden;">$541.00</span>
<span class="t" style="left:1179.00px;top:386.50px;font-size:13.8px;color:#222222;letter-spacing:-0.450px;height:14.50px;overflow:hidden;">LO-Gov161</span>
<span class="t" style="left:1422.00px;top:386.50px;font-size:13.8px;color:#222222;letter-spacing:-0.450px;height:14.50px;overflow:hidden;">STK-4-7/8&quot;</span>
<span class="t" style="left:1662.00px;top:386.50px;font-size:13.8px;color:#222222;letter-spacing:-0.450px;height:14.50px;overflow:hidden;">STK-4-7/8&quot;</span>
<span class="t" style="left:24.95px;top:424.00px;font-size:14px;color:#1b9ad2;letter-spacing:0.488px;-webkit-text-stroke:0.4px #1b9ad2;">Number of Rows: 2</span>
<span class="t" style="left:50.02px;top:513.00px;font-size:14px;color:#181818;letter-spacing:0.654px;-webkit-text-stroke:0.45px #181818;">Opening ID</span>
<span class="t" style="left:178.53px;top:513.00px;font-size:14px;color:#181818;letter-spacing:0.316px;-webkit-text-stroke:0.45px #181818;">Style</span>
<span class="t" style="left:306.53px;top:513.00px;font-size:14px;color:#181818;letter-spacing:1.300px;-webkit-text-stroke:0.45px #181818;">Hand</span>
<span class="t" style="left:436.78px;top:513.00px;font-size:14px;color:#181818;letter-spacing:1.212px;-webkit-text-stroke:0.45px #181818;">Width</span>
<span class="t" style="left:564.52px;top:513.00px;font-size:14px;color:#181818;letter-spacing:1.104px;-webkit-text-stroke:0.45px #181818;">Height</span>
<span class="t" style="left:694.27px;top:513.00px;font-size:14px;color:#181818;letter-spacing:0.656px;-webkit-text-stroke:0.45px #181818;">Jamb Depth</span>
<span class="t" style="left:827.77px;top:513.00px;font-size:14px;color:#181818;letter-spacing:0.968px;-webkit-text-stroke:0.45px #181818;">Exterior</span>
<span class="t" style="left:892.77px;top:513.00px;font-size:14px;color:#181818;letter-spacing:0.739px;-webkit-text-stroke:0.45px #181818;">Label</span>
<span class="t" style="left:992.77px;top:513.00px;font-size:14px;color:#181818;letter-spacing:0.689px;-webkit-text-stroke:0.45px #181818;">Frame Type</span>
<span class="t" style="left:1121.52px;top:513.00px;font-size:14px;color:#181818;letter-spacing:0.737px;-webkit-text-stroke:0.45px #181818;">Door Type(s)</span>
<span class="t" style="left:1250.52px;top:513.00px;font-size:14px;color:#181818;letter-spacing:0.877px;-webkit-text-stroke:0.45px #181818;">Hardware Set</span>
<span class="t" style="left:1379.72px;top:494.00px;font-size:14px;color:#181818;letter-spacing:0.872px;-webkit-text-stroke:0.45px #181818;">Frame</span>
<span class="t" style="left:1379.72px;top:513.00px;font-size:14px;color:#181818;letter-spacing:1.267px;-webkit-text-stroke:0.45px #181818;">Material</span>
<span class="t" style="left:1508.92px;top:494.00px;font-size:14px;color:#181818;letter-spacing:1.022px;-webkit-text-stroke:0.45px #181818;">Door</span>
<span class="t" style="left:1508.92px;top:513.00px;font-size:14px;color:#181818;letter-spacing:0.979px;-webkit-text-stroke:0.45px #181818;">Material(s)</span>
<span class="t" style="left:1638.52px;top:513.00px;font-size:14px;color:#181818;letter-spacing:0.599px;-webkit-text-stroke:0.45px #181818;">Wall Type</span>
<span class="t" style="left:1767.52px;top:513.00px;font-size:14px;color:#181818;letter-spacing:0.626px;-webkit-text-stroke:0.45px #181818;">Wall Thickness</span>
<span class="t" style="left:49.20px;top:533.50px;font-size:13.8px;color:#222222;letter-spacing:0.077px;">102</span>
<span class="t" style="left:179.20px;top:533.50px;font-size:13.8px;color:#222222;letter-spacing:-0.240px;">AA</span>
<span class="t" style="left:307.20px;top:533.50px;font-size:13.8px;color:#222222;letter-spacing:-0.233px;">RH/LH</span>
<span class="t" style="left:533.90px;top:533.50px;font-size:13.8px;color:#222222;letter-spacing:-0.328px;">4' 0&quot;</span>
<span class="t" style="left:662.80px;top:533.50px;font-size:13.8px;color:#222222;letter-spacing:-0.303px;">6' 0&quot;</span>
<span class="t" style="left:782.30px;top:533.50px;font-size:13.8px;color:#222222;letter-spacing:-0.117px;">5 3/4&quot;</span>
<span class="t" style="left:894.20px;top:533.50px;font-size:13.8px;color:#222222;letter-spacing:-0.450px;">S38</span>
<span class="t" style="left:994.20px;top:533.50px;font-size:13.8px;color:#222222;letter-spacing:-0.360px;">ShopWeld.1</span>
<span class="t" style="left:1122.20px;top:533.50px;font-size:13.8px;color:#222222;letter-spacing:-0.285px;">HMD2.1</span>
<span class="t" style="left:1251.20px;top:533.50px;font-size:13.8px;color:#222222;letter-spacing:-0.257px;">H2.1</span>
<span class="t" style="left:1380.20px;top:533.50px;font-size:13.8px;color:#222222;letter-spacing:-0.041px;">Hollow Metal Frame</span>
<span class="t" style="left:1509.20px;top:533.50px;font-size:13.8px;color:#222222;letter-spacing:0.055px;">Hollow Metal Door</span>
<span class="t" style="left:1855.40px;top:533.50px;font-size:13.8px;color:#222222;letter-spacing:-0.137px;">4 7/8&quot;</span>
<span class="t" style="left:49.20px;top:555.50px;font-size:13.8px;color:#222222;letter-spacing:-0.213px;">102.1</span>
<span class="t" style="left:179.20px;top:555.50px;font-size:13.8px;color:#222222;letter-spacing:-0.240px;">AA</span>
<span class="t" style="left:307.20px;top:555.50px;font-size:13.8px;color:#222222;letter-spacing:-0.233px;">RH/LH</span>
<span class="t" style="left:533.90px;top:555.50px;font-size:13.8px;color:#222222;letter-spacing:-0.328px;">4' 0&quot;</span>
<span class="t" style="left:662.80px;top:555.50px;font-size:13.8px;color:#222222;letter-spacing:-0.303px;">6' 0&quot;</span>
<span class="t" style="left:782.30px;top:555.50px;font-size:13.8px;color:#222222;letter-spacing:-0.117px;">5 3/4&quot;</span>
<span class="t" style="left:894.20px;top:555.50px;font-size:13.8px;color:#222222;letter-spacing:-0.450px;">S38</span>
<span class="t" style="left:994.20px;top:555.50px;font-size:13.8px;color:#222222;letter-spacing:-0.227px;">ShopWeld.2</span>
<span class="t" style="left:1122.20px;top:555.50px;font-size:13.8px;color:#222222;letter-spacing:0.055px;">HMD2.2</span>
<span class="t" style="left:1251.20px;top:555.50px;font-size:13.8px;color:#222222;letter-spacing:0.010px;">H2.2</span>
<span class="t" style="left:1380.20px;top:555.50px;font-size:13.8px;color:#222222;letter-spacing:-0.041px;">Hollow Metal Frame</span>
<span class="t" style="left:1509.20px;top:555.50px;font-size:13.8px;color:#222222;letter-spacing:0.055px;">Hollow Metal Door</span>
<span class="t" style="left:1855.40px;top:555.50px;font-size:13.8px;color:#222222;letter-spacing:-0.137px;">4 7/8&quot;</span>
<span class="t" style="left:49.20px;top:577.50px;font-size:13.8px;color:#222222;letter-spacing:-0.323px;">104</span>
<span class="t" style="left:179.20px;top:577.50px;font-size:13.8px;color:#222222;letter-spacing:-0.240px;">SG</span>
<span class="t" style="left:307.20px;top:577.50px;font-size:13.8px;color:#222222;letter-spacing:-0.240px;">RH</span>
<span class="t" style="left:533.90px;top:577.50px;font-size:13.8px;color:#222222;letter-spacing:-0.328px;">3' 0&quot;</span>
<span class="t" style="left:662.80px;top:577.50px;font-size:13.8px;color:#222222;letter-spacing:-0.303px;">7' 0&quot;</span>
<span class="t" style="left:782.30px;top:577.50px;font-size:13.8px;color:#222222;letter-spacing:-0.117px;">5 3/4&quot;</span>
<span class="t" style="left:894.20px;top:577.50px;font-size:13.8px;color:#222222;letter-spacing:-0.450px;">S38</span>
<span class="t" style="left:993.20px;top:577.50px;font-size:13.8px;color:#222222;letter-spacing:-0.240px;">New 1.1</span>
<span class="t" style="left:1122.20px;top:577.50px;font-size:13.8px;color:#222222;letter-spacing:-0.240px;">New 1.1</span>
<span class="t" style="left:1251.20px;top:577.50px;font-size:13.8px;color:#222222;letter-spacing:-0.257px;">H3.1</span>
<span class="t" style="left:1381.20px;top:577.50px;font-size:13.8px;color:#222222;letter-spacing:-0.257px;">Wood Frame</span>
<span class="t" style="left:1510.20px;top:577.50px;font-size:13.8px;color:#222222;letter-spacing:-0.092px;">Wood Door</span>
<span class="t" style="left:1855.40px;top:577.50px;font-size:13.8px;color:#222222;letter-spacing:-0.137px;">4 7/8&quot;</span>
<span class="t" style="left:49.20px;top:599.50px;font-size:13.8px;color:#222222;letter-spacing:-0.323px;">105</span>
<span class="t" style="left:179.20px;top:599.50px;font-size:13.8px;color:#222222;letter-spacing:-0.240px;">SG</span>
<span class="t" style="left:307.20px;top:599.50px;font-size:13.8px;color:#222222;letter-spacing:-0.240px;">RH</span>
<span class="t" style="left:533.90px;top:599.50px;font-size:13.8px;color:#222222;letter-spacing:-0.328px;">3' 0&quot;</span>
<span class="t" style="left:662.80px;top:599.50px;font-size:13.8px;color:#222222;letter-spacing:-0.303px;">7' 0&quot;</span>
<span class="t" style="left:782.30px;top:599.50px;font-size:13.8px;color:#222222;letter-spacing:-0.117px;">5 3/4&quot;</span>
<span class="t" style="left:894.20px;top:599.50px;font-size:13.8px;color:#222222;letter-spacing:-0.450px;">S38</span>
<span class="t" style="left:993.20px;top:599.50px;font-size:13.8px;color:#222222;letter-spacing:-0.240px;">New 2.1</span>
<span class="t" style="left:1122.20px;top:599.50px;font-size:13.8px;color:#222222;letter-spacing:-0.240px;">New 2.1</span>
<span class="t" style="left:1251.20px;top:599.50px;font-size:13.8px;color:#222222;letter-spacing:-0.257px;">H3.1</span>
<span class="t" style="left:1381.20px;top:599.50px;font-size:13.8px;color:#222222;letter-spacing:-0.089px;">Aluminum Frame</span>
<span class="t" style="left:1510.20px;top:599.50px;font-size:13.8px;color:#222222;letter-spacing:0.035px;">Aluminum Door</span>
<span class="t" style="left:1855.40px;top:599.50px;font-size:13.8px;color:#222222;letter-spacing:-0.137px;">4 7/8&quot;</span>
<span class="t" style="left:49.20px;top:621.50px;font-size:13.8px;color:#222222;letter-spacing:-0.323px;">106</span>
<span class="t" style="left:179.20px;top:621.50px;font-size:13.8px;color:#222222;letter-spacing:-0.240px;">SG</span>
<span class="t" style="left:307.20px;top:621.50px;font-size:13.8px;color:#222222;letter-spacing:-0.240px;">RH</span>
<span class="t" style="left:533.90px;top:621.50px;font-size:13.8px;color:#222222;letter-spacing:-0.328px;">3' 0&quot;</span>
<span class="t" style="left:662.80px;top:621.50px;font-size:13.8px;color:#222222;letter-spacing:-0.303px;">7' 0&quot;</span>
<span class="t" style="left:782.30px;top:621.50px;font-size:13.8px;color:#222222;letter-spacing:-0.117px;">5 3/4&quot;</span>
<span class="t" style="left:894.20px;top:621.50px;font-size:13.8px;color:#222222;letter-spacing:-0.450px;">S38</span>
<span class="t" style="left:993.20px;top:621.50px;font-size:13.8px;color:#222222;letter-spacing:-0.240px;">New 3.1</span>
<span class="t" style="left:1122.20px;top:621.50px;font-size:13.8px;color:#222222;letter-spacing:-0.240px;">New 3.1</span>
<span class="t" style="left:1251.20px;top:621.50px;font-size:13.8px;color:#222222;letter-spacing:-0.257px;">H3.1</span>
<span class="t" style="left:1381.20px;top:621.50px;font-size:13.8px;color:#222222;letter-spacing:-0.447px;">Steel Frame</span>
<span class="t" style="left:1510.20px;top:621.50px;font-size:13.8px;color:#222222;letter-spacing:-0.368px;">Glass Door</span>
<span class="t" style="left:1855.40px;top:621.50px;font-size:13.8px;color:#222222;letter-spacing:-0.137px;">4 7/8&quot;</span>
<span class="t" style="left:49.20px;top:643.50px;font-size:13.8px;color:#222222;letter-spacing:0.177px;">107</span>
<span class="t" style="left:179.20px;top:643.50px;font-size:13.8px;color:#222222;letter-spacing:-0.240px;">SG</span>
<span class="t" style="left:307.20px;top:643.50px;font-size:13.8px;color:#222222;letter-spacing:-0.240px;">RH</span>
<span class="t" style="left:533.90px;top:643.50px;font-size:13.8px;color:#222222;letter-spacing:-0.328px;">3' 0&quot;</span>
<span class="t" style="left:662.80px;top:643.50px;font-size:13.8px;color:#222222;letter-spacing:-0.303px;">7' 0&quot;</span>
<span class="t" style="left:782.30px;top:643.50px;font-size:13.8px;color:#222222;letter-spacing:-0.117px;">5 3/4&quot;</span>
<span class="t" style="left:894.20px;top:643.50px;font-size:13.8px;color:#222222;letter-spacing:-0.450px;">S38</span>
<span class="t" style="left:993.20px;top:643.50px;font-size:13.8px;color:#222222;letter-spacing:-0.240px;">New 4.1</span>
<span class="t" style="left:1122.20px;top:643.50px;font-size:13.8px;color:#222222;letter-spacing:-0.240px;">New 4.1</span>
<span class="t" style="left:1251.20px;top:643.50px;font-size:13.8px;color:#222222;letter-spacing:-0.257px;">H3.1</span>
<span class="t" style="left:1381.20px;top:643.50px;font-size:13.8px;color:#222222;letter-spacing:-0.403px;">Stainless Steel Fra...</span>
<span class="t" style="left:1510.20px;top:643.50px;font-size:13.8px;color:#222222;letter-spacing:-0.285px;">Stainless Steel Door</span>
<span class="t" style="left:1855.40px;top:643.50px;font-size:13.8px;color:#222222;letter-spacing:-0.137px;">4 7/8&quot;</span>
<span class="t" style="left:49.20px;top:665.50px;font-size:13.8px;color:#222222;letter-spacing:-0.323px;">108</span>
<span class="t" style="left:179.20px;top:665.50px;font-size:13.8px;color:#222222;letter-spacing:-0.240px;">SG</span>
<span class="t" style="left:307.20px;top:665.50px;font-size:13.8px;color:#222222;letter-spacing:-0.240px;">RH</span>
<span class="t" style="left:533.90px;top:665.50px;font-size:13.8px;color:#222222;letter-spacing:-0.328px;">3' 0&quot;</span>
<span class="t" style="left:662.80px;top:665.50px;font-size:13.8px;color:#222222;letter-spacing:-0.303px;">7' 0&quot;</span>
<span class="t" style="left:782.30px;top:665.50px;font-size:13.8px;color:#222222;letter-spacing:-0.117px;">5 3/4&quot;</span>
<span class="t" style="left:894.20px;top:665.50px;font-size:13.8px;color:#222222;letter-spacing:-0.450px;">S38</span>
<span class="t" style="left:993.20px;top:665.50px;font-size:13.8px;color:#222222;letter-spacing:-0.115px;">NonWelded.1.1</span>
<span class="t" style="left:1122.20px;top:665.50px;font-size:13.8px;color:#222222;letter-spacing:-0.285px;">HMD3.1</span>
<span class="t" style="left:1251.20px;top:665.50px;font-size:13.8px;color:#222222;letter-spacing:-0.257px;">H3.1</span>
<span class="t" style="left:1380.20px;top:665.50px;font-size:13.8px;color:#222222;letter-spacing:-0.041px;">Hollow Metal Frame</span>
<span class="t" style="left:1509.20px;top:665.50px;font-size:13.8px;color:#222222;letter-spacing:0.055px;">Hollow Metal Door</span>
<span class="t" style="left:1855.40px;top:665.50px;font-size:13.8px;color:#222222;letter-spacing:-0.137px;">4 7/8&quot;</span>
</body></html>
